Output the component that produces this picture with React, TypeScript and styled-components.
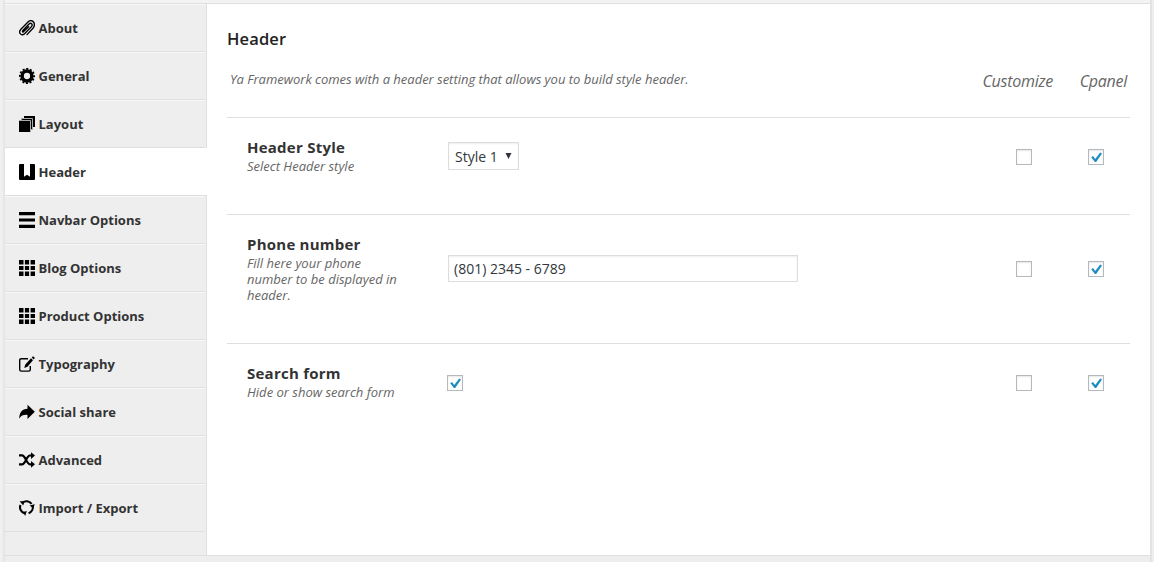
import React from "react";
import styled, { createGlobalStyle } from "styled-components";

const GlobalStyle = createGlobalStyle`
  *, *::before, *::after { box-sizing: border-box; }
  body {
    margin: 0;
    background: #eee;
    font-family: "Open Sans", sans-serif;
    font-size: 13px;
    color: #333;
    overflow: hidden;
  }
`;

const Page = styled.div`
  display: grid;
  grid-template-columns: 5px 1fr 4px;
  height: 562px;
`;

const Edge = styled.div<{ $side: "left" | "right" }>`
  background: ${(p) =>
    p.$side === "left"
      ? "linear-gradient(to right, #f2f2f2 0, #ededed 3px, #e4e4e4 4px, #e4e4e4 5px)"
      : "linear-gradient(to right, #e3e3e3 0, #e3e3e3 2px, #eee 2px, #eee 4px)"};
`;

const Panel = styled.div`
  display: flex;
  flex-direction: column;
`;

const TopStrip = styled.div`
  height: 4px;
  background: #f3f3f3;
  border-bottom: 1px solid #dfdfdf;
`;

const Body = styled.div`
  display: flex;
  height: 552px;
  background: #fff;
  border-bottom: 1px solid #dfdfdf;
`;

const Sidebar = styled.nav`
  width: 202px;
  background: #eee;
  border-right: 1px solid #dfdfdf;
`;

const MenuItem = styled.a<{ $active?: boolean }>`
  display: flex;
  align-items: center;
  gap: 3.5px;
  width: ${(p) => (p.$active ? 202 : 200)}px;
  height: 48px;
  padding-left: 14px;
  border-top: 1px solid ${(p) => (p.$active ? "#fff" : "#f9f9f9")};
  border-bottom: 1px solid #dfdfdf;
  background: ${(p) => (p.$active ? "#fff" : "#eee")};
  font-weight: 700;
  line-height: 18px;
  white-space: nowrap;

  svg {
    width: 16px;
    height: 16px;
    flex: none;
    color: #000;
  }
`;

const Main = styled.main`
  width: 943px;
  padding: 0 20px;
`;

const SectionHead = styled.header`
  height: 113px;
  padding-top: 24px;
`;

const Title = styled.h3`
  margin: 0;
  font-size: 16.5px;
  line-height: 22px;
  font-weight: 600;
  letter-spacing: 0.15px;
  color: #222;
`;

const Intro = styled.div`
  display: flex;
  padding: 20px 0 0 3px;
  font-style: italic;
  color: #666;
`;

const IntroText = styled.p`
  margin: 0;
  flex: 1;
  line-height: 18px;
  letter-spacing: -0.015px;
`;

const ColumnLabel = styled.span<{ $width: number }>`
  width: ${(p) => p.$width}px;
  font-size: 16px;
  line-height: 22px;
  letter-spacing: -0.26px;
  text-align: right;
`;

const Columns = styled.div`
  display: flex;
  padding-right: 3px;
`;

const SettingRow = styled.section<{ $height: number }>`
  display: grid;
  grid-template-columns: 200px 1fr 72px 42px;
  height: ${(p) => p.$height}px;
  padding-left: 20px;
  border-top: 1px solid #dfdfdf;
`;

const Label = styled.div`
  width: 155px;
  padding-top: 19px;
`;

const LabelTitle = styled.div`
  margin-bottom: 1px;
  font-size: 15px;
  line-height: 20px;
  font-weight: 700;
  letter-spacing: 0.24px;
`;

const LabelNote = styled.div`
  font-size: 13px;
  line-height: 16px;
  font-style: italic;
  color: #666;
`;

const Cell = styled.div<{ $top: number; $indent?: number }>`
  padding: ${(p) => p.$top}px 0 0 ${(p) => p.$indent ?? 0}px;
`;

const Field = styled.div<{ $width: number; $height: number; $pad: number }>`
  display: flex;
  align-items: center;
  justify-content: space-between;
  width: ${(p) => p.$width}px;
  height: ${(p) => p.$height}px;
  padding: 0 ${(p) => p.$pad}px;
  border: 1px solid #ddd;
  background: #fff;
  box-shadow: inset 0 1px 2px rgba(0, 0, 0, 0.07);
  font-size: 14px;
  color: #32373c;

  svg {
    width: 7px;
    height: 6px;
    margin-bottom: 0;
  }
`;

const Box = styled.span`
  display: block;
  width: 16px;
  height: 16px;
  border: 1px solid #b4b9be;
  background: #fff;
  box-shadow: inset 0 1px 2px rgba(0, 0, 0, 0.1);

  svg {
    display: block;
    width: 14px;
    height: 14px;
  }
`;

function Checkbox({ checked }: { checked?: boolean }) {
  return (
    <Box role="checkbox" aria-checked={!!checked}>
      {checked && (
        <svg viewBox="0 0 14 14" fill="#1e8cbe">
          <path d="M2.2 7.2 4.1 6.1 6.2 8.9 11.2 2.4 13 3.5 7.2 12 5.9 12Z" />
        </svg>
      )}
    </Box>
  );
}

function Icon({ name }: { name: string }) {
  const stroke = { fill: "none", stroke: "currentColor" };
  switch (name) {
    case "clip":
      return (
        <svg viewBox="0 0 16 16" {...stroke} strokeWidth="1.35" strokeLinecap="round">
          <path d="M8 14.6 14 8.2C16.2 5.8 15.5 2.6 13.9 1.4 12.4.3 10.4.6 9 2L1.9 9.2C.5 10.7.4 12.7 1.4 13.9 2.5 15.2 4.5 14.9 5.8 13.5L12.1 7C13.2 5.8 13.4 4.5 12.6 3.7 11.8 3 10.7 3.3 9.8 4.2L3.9 10.5C3.2 11.3 3.4 12.2 4.3 12L9.6 6.7" />
        </svg>
      );
    case "gear":
      return (
        <svg viewBox="0 0 16 16" {...stroke}>
          <circle cx="8" cy="8" r="4.9" strokeWidth="3.5" />
          <circle cx="8" cy="8" r="7.1" strokeWidth="1.8" strokeDasharray="2.1 1.617" strokeDashoffset="1.05" />
        </svg>
      );
    case "layers":
      return (
        <svg viewBox="0 0 16 16" fill="currentColor">
          <path d="M5 0H16V11H5Z" />
          <path d="M2.5 2.5H13.5V13.5H2.5Z" stroke="#aaa" strokeWidth="1" />
          <path d="M-1 4.5H11.5V17H-1Z" stroke="#aaa" strokeWidth="1" />
        </svg>
      );
    case "bookmark":
      return (
        <svg viewBox="0 0 16 16" fill="currentColor">
          <path d="M1 0H5V12.7L8 10.8 11 12.7V0H15Q16 0 16 1V15Q16 16 15 16H1Q0 16 0 15V1Q0 0 1 0Z" />
        </svg>
      );
    case "lines":
      return (
        <svg viewBox="0 0 16 16" fill="currentColor">
          <path d="M0 0H16V3.2H0ZM0 6.5H16V9.5H0ZM0 12.8H16V16H0Z" />
        </svg>
      );
    case "grid":
      return (
        <svg viewBox="0 0 16 16" fill="currentColor">
          <path d="M0 0H4.5V4.4H0ZM5.9 0H10.1V4.4H5.9ZM11.6 0H16V4.4H11.6ZM0 5.9H4.5V10.1H0ZM5.9 5.9H10.1V10.1H5.9ZM11.6 5.9H16V10.1H11.6ZM0 11.6H4.5V16H0ZM5.9 11.6H10.1V16H5.9ZM11.6 11.6H16V16H11.6Z" />
        </svg>
      );
    case "edit":
      return (
        <svg viewBox="0 0 16 16">
          <path d="M9 2.7H2.3Q.7 2.7.7 4.3V13.5Q.7 15.1 2.3 15.1H9.7Q11.3 15.1 11.3 13.5V10" fill="none" stroke="currentColor" strokeWidth="1.4" />
          <path d="M5.2 12 6.3 8.5 12 2.3 14 4.3 8.5 10.7ZM12.7 1.6 14 .3 15.9 1.7 14.7 3.5Z" fill="currentColor" />
        </svg>
      );
    case "share":
      return (
        <svg viewBox="0 0 16 16" fill="currentColor">
          <path d="M8.5 .8 15.8 7.7 8.5 15V10.9C4.5 10.7 2 11.5.3 14.7.1 8.6 3.2 4.8 8.5 4.7Z" />
        </svg>
      );
    case "shuffle":
      return (
        <svg viewBox="0 0 16 16">
          <path d="M0 3.3H3C6.5 3.3 7.5 12.3 11 12.3H13M0 12.3H3C6.5 12.3 7.5 3.5 11 3.5H13" fill="none" stroke="currentColor" strokeWidth="2.2" />
          <path d="M12 .3 16 3.6 12 7ZM12 8.9 16 12.3 12 15.7Z" fill="currentColor" />
        </svg>
      );
    default:
      return (
        <svg viewBox="0 0 16 16">
          <path d="M3.4 2.9A6.2 6.2 0 0 1 12.6 3.8M13.7 6.3A6.2 6.2 0 0 1 9.6 13.2M5.6 13.3A6.2 6.2 0 0 1 1.5 5" fill="none" stroke="currentColor" strokeWidth="2.1" />
          <path d="M10.6 5.4 15.8 4.3 14.2 8.2ZM4 12 6.2 15.9 7.8 10.9ZM.6 1.3 5.5 1.2 4.2 5.5Z" fill="currentColor" />
        </svg>
      );
  }
}

const menu = [
  ["clip", "About"],
  ["gear", "General"],
  ["layers", "Layout"],
  ["bookmark", "Header"],
  ["lines", "Navbar Options"],
  ["grid", "Blog Options"],
  ["grid", "Product Options"],
  ["edit", "Typography"],
  ["share", "Social share"],
  ["shuffle", "Advanced"],
  ["cycle", "Import / Export"],
];

type RowProps = {
  title: string;
  note: string;
  height: number;
  boxTop: number;
  controlTop: number;
  controlIndent?: number;
  children: React.ReactNode;
};

function Setting({ title, note, height, boxTop, controlTop, controlIndent, children }: RowProps) {
  return (
    <SettingRow $height={height}>
      <Label>
        <LabelTitle>{title}</LabelTitle>
        <LabelNote>{note}</LabelNote>
      </Label>
      <Cell $top={controlTop} $indent={controlIndent}>{children}</Cell>
      <Cell $top={boxTop}><Checkbox /></Cell>
      <Cell $top={boxTop}><Checkbox checked /></Cell>
    </SettingRow>
  );
}

export default function App() {
  return (
    <Page>
      <GlobalStyle />
      <Edge $side="left" />
      <Panel>
        <TopStrip />
        <Body>
          <Sidebar>
            {menu.map(([icon, label]) => (
              <MenuItem key={label} $active={label === "Header"}>
                <Icon name={icon} />
                {label}
              </MenuItem>
            ))}
          </Sidebar>
          <Main>
            <SectionHead>
              <Title>Header</Title>
              <Intro>
                <IntroText>Ya Framework comes with a header setting that allows you to build style header.</IntroText>
                <Columns>
                  <ColumnLabel $width={90}>Customize</ColumnLabel>
                  <ColumnLabel $width={74}>Cpanel</ColumnLabel>
                </Columns>
              </Intro>
            </SectionHead>
            <Setting title="Header Style" note="Select Header style" height={97} boxTop={31} controlTop={24} controlIndent={1}>
              <Field $width={71} $height={28} $pad={6}>
                Style 1
                <svg viewBox="0 0 7 6" fill="#32373c"><path d="M.5 0H6.5L3.5 6Z" /></svg>
              </Field>
            </Setting>
            <Setting title="Phone number" note="Fill here your phone number to be displayed in header." height={129} boxTop={46} controlTop={40} controlIndent={1}>
              <Field $width={350} $height={27} $pad={5}>(801) 2345 - 6789</Field>
            </Setting>
            <Setting title="Search form" note="Hide or show search form" height={211} boxTop={31} controlTop={31}>
              <Checkbox checked />
            </Setting>
          </Main>
        </Body>
      </Panel>
      <Edge $side="right" />
    </Page>
  );
}
